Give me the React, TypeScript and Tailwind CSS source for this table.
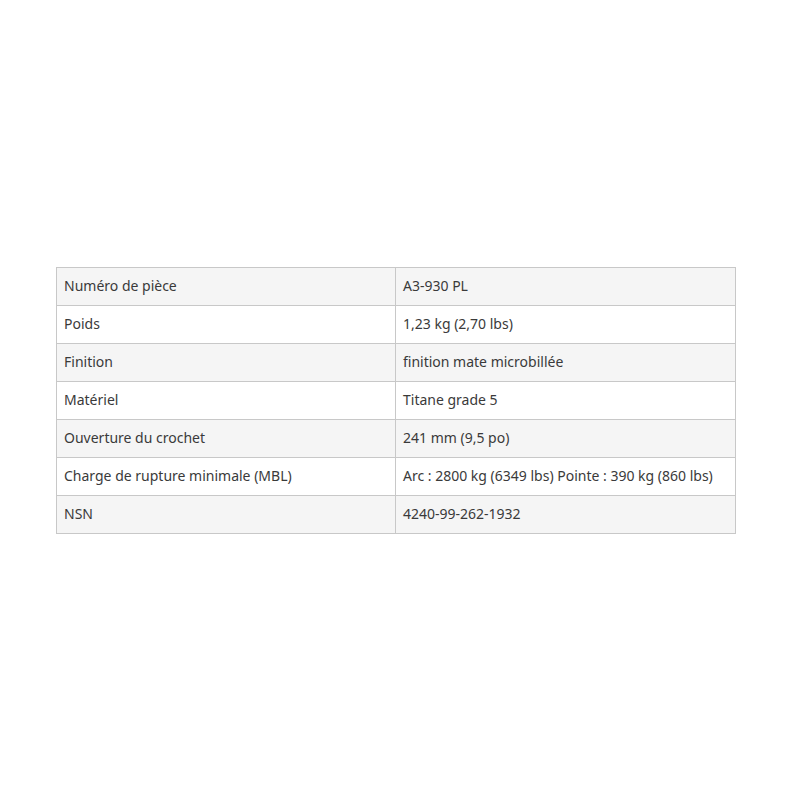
import React from "react";

const rows: [string, string][] = [
  ["Numéro de pièce", "A3-930 PL"],
  ["Poids", "1,23 kg (2,70 lbs)"],
  ["Finition", "finition mate microbillée"],
  ["Matériel", "Titane grade 5"],
  ["Ouverture du crochet", "241 mm (9,5 po)"],
  ["Charge de rupture minimale (MBL)", "Arc : 2800 kg (6349 lbs) Pointe : 390 kg (860 lbs)"],
  ["NSN", "4240-99-262-1932"],
];

export default function App() {
  return (
    <div
      className="flex h-[800px] w-[800px] items-center bg-white pl-[56px] pr-[64px]"
      style={{ fontFamily: '"Noto Sans", "Open Sans", sans-serif' }}
    >
      <table className="w-[680px] border-collapse text-[14px] text-[#3a3a3a]">
        <tbody>
          {rows.map(([k, v], i) => (
            <tr key={k} className={i % 2 === 0 ? "bg-[#f5f5f5]" : "bg-white"}>
              <td className="w-[339px] border border-[#c8c8c8] px-[7px] pt-[7px] pb-[9px] leading-[21px] align-middle">{k}</td>
              <td className="border border-[#c8c8c8] px-[7px] pt-[7px] pb-[9px] leading-[21px] align-middle">{v}</td>
            </tr>
          ))}
        </tbody>
      </table>
    </div>
  );
}
